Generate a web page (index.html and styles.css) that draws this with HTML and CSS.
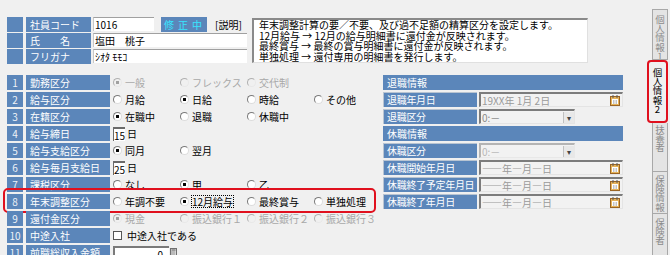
FILE: index.html
```html
<!DOCTYPE html>
<html lang="ja">

<head>
  <meta charset="UTF-8">
  <title>個人情報2</title>
  <link rel="stylesheet" href="styles.css">
</head>

<body>
  <div class="screen">
    <div class="main">

      <div class="head">
        <div class="head-fields">
          <div class="hrow">
            <span class="num"></span>
            <span class="lbl">社員コード</span>
            <span class="field code">1016</span>
            <span class="status">修正中</span>
            <span class="explain">[説明]</span>
          </div>
          <div class="hrow">
            <span class="num"></span>
            <span class="lbl">氏　　名</span>
            <span class="field name">塩田　桃子</span>
          </div>
          <div class="hrow">
            <span class="num"></span>
            <span class="lbl">フリガナ</span>
            <span class="field name">ｼｵﾀ ﾓﾓｺ</span>
          </div>
        </div>
        <div class="memo">
          年末調整計算の要／不要、及び過不足額の精算区分を設定します。<br>
          12月給与 → 12月の給与明細書に還付金が反映されます。<br>
          最終賞与 → 最終の賞与明細書に還付金が反映されます。<br>
          単独処理 → 還付専用の明細書を発行します。
        </div>
      </div>

      <div class="form">
        <div class="left">
          <div class="row">
            <span class="num">1</span>
            <span class="lbl">勤務区分</span>
            <span class="opt off"><i class="rb on"></i>一般</span>
            <span class="opt off"><i class="rb"></i>フレックス</span>
            <span class="opt off"><i class="rb"></i>交代制</span>
          </div>
          <div class="row">
            <span class="num">2</span>
            <span class="lbl">給与区分</span>
            <span class="opt"><i class="rb"></i>月給</span>
            <span class="opt"><i class="rb on"></i>日給</span>
            <span class="opt"><i class="rb"></i>時給</span>
            <span class="opt"><i class="rb"></i>その他</span>
          </div>
          <div class="row">
            <span class="num">3</span>
            <span class="lbl">在籍区分</span>
            <span class="opt"><i class="rb on"></i>在職中</span>
            <span class="opt"><i class="rb"></i>退職</span>
            <span class="opt"><i class="rb"></i>休職中</span>
          </div>
          <div class="row">
            <span class="num">4</span>
            <span class="lbl">給与締日</span>
            <span class="day"><span class="field small">15</span>日</span>
          </div>
          <div class="row">
            <span class="num">5</span>
            <span class="lbl">給与支給区分</span>
            <span class="opt"><i class="rb on"></i>同月</span>
            <span class="opt"><i class="rb"></i>翌月</span>
          </div>
          <div class="row">
            <span class="num">6</span>
            <span class="lbl">給与毎月支給日</span>
            <span class="day"><span class="field small">25</span>日</span>
          </div>
          <div class="row">
            <span class="num">7</span>
            <span class="lbl">課税区分</span>
            <span class="opt"><i class="rb"></i>なし</span>
            <span class="opt"><i class="rb on"></i>甲</span>
            <span class="opt"><i class="rb"></i>乙</span>
          </div>
          <div class="row marked">
            <span class="num">8</span>
            <span class="lbl">年末調整区分</span>
            <span class="opt"><i class="rb"></i>年調不要</span>
            <span class="opt"><i class="rb on"></i><span class="focus">12月給与</span></span>
            <span class="opt"><i class="rb"></i>最終賞与</span>
            <span class="opt"><i class="rb"></i>単独処理</span>
          </div>
          <div class="row">
            <span class="num">9</span>
            <span class="lbl">還付金区分</span>
            <span class="opt off"><i class="rb on"></i>現金</span>
            <span class="opt off"><i class="rb"></i>振込銀行１</span>
            <span class="opt off"><i class="rb"></i>振込銀行２</span>
            <span class="opt off"><i class="rb"></i>振込銀行３</span>
          </div>
          <div class="row">
            <span class="num">10</span>
            <span class="lbl">中途入社</span>
            <span class="opt wide"><i class="cb"></i>中途入社である</span>
          </div>
          <div class="row">
            <span class="num">11</span>
            <span class="lbl">前職総収入金額</span>
            <span class="field amount">0</span>
            <svg class="calc" width="7" height="9" viewBox="0 0 7 9">
              <rect x="0.5" y="0.5" width="6" height="8" fill="#d8d8d8" stroke="#707070"/>
              <path d="M1.5 2h4M1.5 4h1M3.5 4h1M1.5 6h1M3.5 6h1" stroke="#606060"/>
            </svg>
          </div>
        </div>

        <div class="right">
          <div class="rhead">退職情報</div>
          <div class="rrow">
            <span class="rlbl">退職年月日</span>
            <span class="date">19XX年 1月 2日
              <svg class="cal" width="10" height="11" viewBox="0 0 10 11">
                <rect x="0.5" y="1.5" width="9" height="9" fill="#e6b35a" stroke="#9a6424"/>
                <rect x="2" y="4" width="6" height="5" fill="#fff"/>
                <path d="M3 6h1.5M5.5 6h1.5M3 8h1.5M5.5 8h1.5" stroke="#8a8a8a"/>
                <path d="M3 0v3M7 0v3" stroke="#5a5a5a"/>
              </svg>
            </span>
          </div>
          <div class="rrow">
            <span class="rlbl">退職区分</span>
            <span class="select">0:－<span class="drop">▾</span></span>
          </div>
          <div class="rhead">休職情報</div>
          <div class="rrow">
            <span class="rlbl">休職区分</span>
            <span class="select off">0:－<span class="drop">▾</span></span>
          </div>
          <div class="rrow">
            <span class="rlbl">休職開始年月日</span>
            <span class="date empty">――年―月―日
              <svg class="cal" width="10" height="11" viewBox="0 0 10 11">
                <rect x="0.5" y="1.5" width="9" height="9" fill="#e6b35a" stroke="#9a6424"/>
                <rect x="2" y="4" width="6" height="5" fill="#fff"/>
                <path d="M3 6h1.5M5.5 6h1.5M3 8h1.5M5.5 8h1.5" stroke="#8a8a8a"/>
                <path d="M3 0v3M7 0v3" stroke="#5a5a5a"/>
              </svg>
            </span>
          </div>
          <div class="rrow">
            <span class="rlbl">休職終了予定年月日</span>
            <span class="date empty">――年―月―日
              <svg class="cal" width="10" height="11" viewBox="0 0 10 11">
                <rect x="0.5" y="1.5" width="9" height="9" fill="#e6b35a" stroke="#9a6424"/>
                <rect x="2" y="4" width="6" height="5" fill="#fff"/>
                <path d="M3 6h1.5M5.5 6h1.5M3 8h1.5M5.5 8h1.5" stroke="#8a8a8a"/>
                <path d="M3 0v3M7 0v3" stroke="#5a5a5a"/>
              </svg>
            </span>
          </div>
          <div class="rrow">
            <span class="rlbl">休職終了年月日</span>
            <span class="date empty">――年―月―日
              <svg class="cal" width="10" height="11" viewBox="0 0 10 11">
                <rect x="0.5" y="1.5" width="9" height="9" fill="#e6b35a" stroke="#9a6424"/>
                <rect x="2" y="4" width="6" height="5" fill="#fff"/>
                <path d="M3 6h1.5M5.5 6h1.5M3 8h1.5M5.5 8h1.5" stroke="#8a8a8a"/>
                <path d="M3 0v3M7 0v3" stroke="#5a5a5a"/>
              </svg>
            </span>
          </div>
        </div>
      </div>
    </div>

    <div class="tabs">
      <div class="tab t1"><span>個人情報1</span></div>
      <div class="tab active"><span>個人情報2</span></div>
      <div class="tab t3"><span>扶養者</span></div>
      <div class="tab t4"><span>保険情報</span></div>
      <div class="tab t5"><span>保険者</span></div>
    </div>
  </div>
</body>

</html>
```

FILE: styles.css
```css
body {
  margin: 0;
  height: 255px;
  overflow: hidden;
  background-color: #f0f0f0;
  color: #000;
  font-family: "Noto Sans CJK JP", "Liberation Sans", sans-serif;
  font-size: 10px;
}

.screen {
  display: flex;
}

.main {
  flex: none;
  width: 647px;
}

/* header block */

.head {
  display: flex;
  margin: 17px 0 0 7px;
}

.head-fields {
  flex: none;
  width: 245px;
}

.hrow {
  display: flex;
  height: 15px;
  margin-bottom: 1px;
  line-height: 15px;
}

.num {
  flex: none;
  width: 16px;
  margin-right: 3px;
  background-color: #5b86ba;
  color: #eef2f8;
  text-align: center;
}

.lbl {
  flex: none;
  box-sizing: border-box;
  width: 65px;
  margin-right: 2px;
  padding-left: 4px;
  background-color: #5b86ba;
  color: #fff;
  white-space: nowrap;
}

.field {
  flex: none;
  box-sizing: border-box;
  height: 14px;
  padding-left: 1px;
  background-color: #fff;
  border-top: 1px solid #a0a0a0;
  border-left: 1px solid #c8c8c8;
  line-height: 13px;
  white-space: nowrap;
}

.code {
  width: 61px;
}

.name {
  width: 154px;
}

.status {
  flex: none;
  box-sizing: border-box;
  width: 46px;
  margin-left: 7px;
  padding-left: 3px;
  background-color: #5b86ba;
  color: #38e4ff;
  letter-spacing: 4px;
  white-space: nowrap;
}

.explain {
  flex: none;
  margin-left: 8px;
  white-space: nowrap;
}

.memo {
  flex: none;
  box-sizing: border-box;
  width: 336px;
  height: 45px;
  margin: 1px 0 0 0;
  padding: 0 0 0 5px;
  background-color: #fff;
  border-top: 2px solid #8a8a8a;
  border-left: 2px solid #8a8a8a;
  border-right: 1px solid #e0e0e0;
  border-bottom: 1px solid #e0e0e0;
  line-height: 10.5px;
  white-space: nowrap;
  overflow: hidden;
}

/* form */

.form {
  display: flex;
  margin-top: 10px;
}

.left {
  width: 368px;
  margin-left: 7px;
}

.row {
  position: relative;
  display: flex;
  align-items: center;
  height: 15px;
  margin-bottom: 2px;
  line-height: 15px;
}

.row .lbl {
  width: 84px;
  margin-right: 3px;
}

.row.marked::after {
  content: "";
  position: absolute;
  left: -4px;
  right: -1px;
  top: -6px;
  bottom: -4px;
  border: 2px solid #e0101e;
  border-radius: 5px;
}

.opt {
  display: flex;
  align-items: center;
  gap: 3px;
  width: 67px;
  flex: none;
  white-space: nowrap;
}

.opt.wide {
  width: 150px;
}

.opt.off {
  color: #a8a8a8;
}

.rb {
  flex: none;
  box-sizing: border-box;
  width: 9px;
  height: 9px;
  border-radius: 50%;
  border: 1px solid;
  border-color: #7a7a7a #dcdcdc #dcdcdc #7a7a7a;
  background: #fff;
}

.rb.on {
  background: radial-gradient(circle, #000 0 1.4px, #fff 2px);
}

.off .rb {
  background: #f0f0f0;
  border-color: #b0b0b0 #e8e8e8 #e8e8e8 #b0b0b0;
}

.off .rb.on {
  background: radial-gradient(circle, #a0a0a0 0 1.4px, #f0f0f0 2px);
}

.cb {
  flex: none;
  box-sizing: border-box;
  width: 9px;
  height: 9px;
  background: #fff;
  border: 1px solid #555;
  margin-right: 2px;
}

.focus {
  outline: 1px dotted #000;
  line-height: 11px;
}

.day {
  display: flex;
  align-items: center;
  gap: 2px;
}

.field.small {
  width: 12px;
  border-top: 2px solid #6a6a6a;
  border-left: 1px solid #6a6a6a;
  padding-left: 0;
}

.field.amount {
  width: 56px;
  padding-right: 6px;
  text-align: right;
  border-top: 2px solid #7a7a7a;
  border-left: 2px solid #7a7a7a;
}

.calc {
  margin-left: 1px;
}

/* right column */

.right {
  width: 240px;
  margin-left: 8px;
}

.rhead {
  height: 15px;
  margin-bottom: 2px;
  padding-left: 4px;
  background-color: #5b86ba;
  color: #fff;
  line-height: 15px;
}

.rrow {
  display: flex;
  height: 15px;
  margin-bottom: 2px;
  line-height: 15px;
}

.rlbl {
  flex: none;
  box-sizing: border-box;
  width: 94px;
  margin-right: 2px;
  padding-left: 3px;
  background-color: #5b86ba;
  color: #fff;
  white-space: nowrap;
  overflow: hidden;
  border-top: 1px solid #b8c4d2;
  border-left: 1px solid #b8c4d2;
  letter-spacing: -0.3px;
  line-height: 14px;
}

.date,
.select {
  display: flex;
  align-items: center;
  box-sizing: border-box;
  height: 15px;
  padding-left: 1px;
  background-color: #f2f2f2;
  border-top: 2px solid #7c7c7c;
  border-left: 2px solid #7c7c7c;
  border-right: 1px solid #e4e4e4;
  border-bottom: 1px solid #e4e4e4;
  color: #9a9a9a;
  white-space: nowrap;
}

.date {
  width: 144px;
}

.date .cal {
  margin-left: auto;
  margin-right: 2px;
}

.select {
  width: 96px;
  color: #8a8a8a;
}

.select.off {
  color: #b8b8b8;
  border-color: #b4b4b4 #e8e8e8 #e8e8e8 #b4b4b4;
}

.drop {
  margin-left: auto;
  width: 10px;
  height: 11px;
  background-color: #e8e8e8;
  border-left: 1px solid #c0c0c0;
  color: #444;
  font-size: 8px;
  line-height: 11px;
  text-align: center;
}

/* side tabs */

.tabs {
  width: 21px;
  padding-top: 9px;
}

.tab {
  box-sizing: border-box;
  display: flex;
  justify-content: center;
  width: 16px;
  margin-left: 5px;
  background-color: #e4e4e4;
  border: 1px solid #a8a8a8;
  border-top: none;
  color: #8c8c8c;
  overflow: hidden;
}

.tab span {
  width: 10px;
  word-break: break-all;
  font-size: 9.5px;
  line-height: 9.2px;
  text-align: center;
}

.t1 {
  height: 51px;
  padding-top: 5px;
  border-top: 1px solid #a8a8a8;
}

.tab.active {
  height: 63px;
  width: 21px;
  margin-left: 0;
  padding-top: 6px;
  background-color: #f0f0f0;
  border: 2px solid #e0101e;
  border-radius: 4px;
  color: #000;
}

.t3 {
  height: 49px;
  padding-top: 2px;
}

.t4 {
  height: 42px;
  padding-top: 3px;
}

.t5 {
  height: 50px;
  padding-top: 4px;
}
```
